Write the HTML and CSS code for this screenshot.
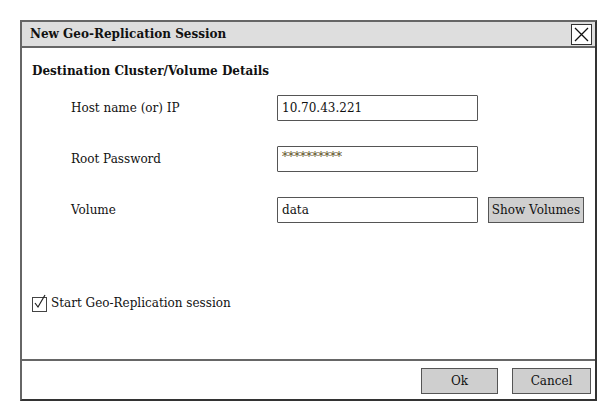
FILE: index.html
```html
<!DOCTYPE html>
<html>
<head>
<meta charset="utf-8">
<link rel="stylesheet" href="styles.css">
</head>
<body>
<div class="dialog">
  <div class="titlebar">
    <span class="title">New Geo-Replication Session</span>
    <span class="close"><svg width="19" height="19" viewBox="0 0 19 19"><path d="M3 3 L16 16 M16 3 L3 16" stroke="#111" stroke-width="1.3" fill="none"/></svg></span>
  </div>
  <div class="content">
    <div class="heading">Destination Cluster/Volume Details</div>
    <div class="form">
      <div class="row">
        <span class="label">Host name (or) IP</span>
        <span class="input">10.70.43.221</span>
      </div>
      <div class="row">
        <span class="label">Root Password</span>
        <span class="input pwd">**********</span>
      </div>
      <div class="row">
        <span class="label">Volume</span>
        <span class="input">data</span>
        <span class="btn show">Show Volumes</span>
      </div>
    </div>
    <div class="check">
      <span class="box"><svg width="16" height="17" viewBox="0 0 16 17"><path d="M3 9 L6 13 L13 1" stroke="#222" stroke-width="1.2" fill="none"/></svg></span>
      <span>Start Geo-Replication session</span>
    </div>
  </div>
  <div class="footer">
    <span class="btn ok">Ok</span>
    <span class="btn cancel">Cancel</span>
  </div>
</div>
</body>
</html>
```
FILE: styles.css
```css
html, body { margin: 0; padding: 0; background: #fff; }
body {
  font-family: "DejaVu Serif", serif;
  font-size: 12px;
  line-height: 15px;
  color: #111;
}
.dialog {
  margin: 20px 0 0 20px;
  width: 577px;
  height: 381px;
  box-sizing: border-box;
  border: 2px solid #666;
  border-right-color: #333;
  border-bottom-color: #333;
  display: flex;
  flex-direction: column;
}
.titlebar {
  height: 24px;
  background: #dedede;
  border-bottom: 2px solid #666;
  display: flex;
  align-items: center;
  padding-left: 8px;
  padding-right: 3px;
}
.title {
  font-weight: bold;
  flex: 1;
}
.close {
  width: 19px;
  height: 19px;
  border: 1px solid #333;
  background: #fff;
  display: flex;
}
.content {
  flex: 1;
  padding-left: 10px;
  padding-top: 15px;
}
.heading {
  font-weight: bold;
  line-height: 16px;
}
.form {
  margin-top: 16px;
  margin-left: 39px;
  display: flex;
  flex-direction: column;
  gap: 25px;
}
.row {
  display: flex;
  align-items: center;
  height: 26px;
}
.label {
  width: 206px;
}
.input {
  width: 201px;
  height: 26px;
  box-sizing: border-box;
  border: 1.5px solid #555;
  border-radius: 1px;
  padding-left: 4px;
  display: flex;
  align-items: center;
}
.pwd {
  padding-bottom: 3px;
  color: #5a4a20;
}
.btn {
  height: 26px;
  box-sizing: border-box;
  border: 1.5px solid #555;
  background: #cfcfcf;
  display: flex;
  align-items: center;
  justify-content: center;
  white-space: nowrap;
}
.show {
  margin-left: 10px;
  width: 96px;
}
.check {
  margin-top: 71px;
  display: flex;
  align-items: center;
  gap: 4px;
  height: 18px;
}
.box {
  width: 15px;
  height: 15px;
  margin-top: 2px;
  box-sizing: border-box;
  border: 1.5px solid #444;
  display: flex;
  position: relative;
  overflow: visible;
}
.box svg {
  position: absolute;
  left: -1px;
  top: -4px;
}
.footer {
  border-top: 2px solid #666;
  height: 40px;
  box-sizing: border-box;
  display: flex;
  justify-content: flex-end;
  padding-top: 7px;
  padding-right: 4px;
  gap: 14px;
}
.ok { width: 77px; }
.cancel { width: 79px; }
```
